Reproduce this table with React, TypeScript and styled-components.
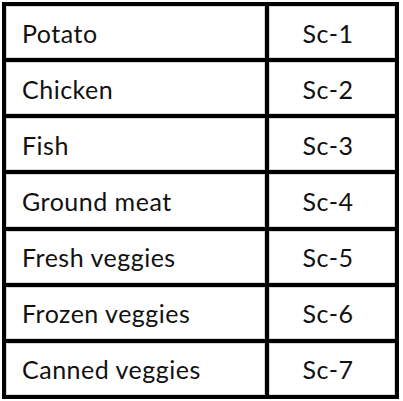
import { Fragment } from "react";
import styled, { createGlobalStyle } from "styled-components";

const GlobalStyle = createGlobalStyle`
  html, body {
    margin: 0;
    padding: 0;
    background: #ffffff;
  }
  body {
    font-family: Lato, "Noto Sans", "DejaVu Sans", sans-serif;
  }
`;

const Page = styled.div`
  padding: 2px;
`;

const Table = styled.div`
  display: grid;
  grid-template-columns: 259px 126px;
  grid-template-rows: repeat(7, 1fr);
  gap: 4px;
  width: max-content;
  height: 397px;
  box-sizing: border-box;
  padding: 4px;
  background: #000000;
`;

const Cell = styled.div<{ $center?: boolean }>`
  display: flex;
  align-items: center;
  justify-content: ${(p) => (p.$center ? "center" : "flex-start")};
  padding: ${(p) => (p.$center ? "2px 8px 0 0" : "2px 0 0 16px")};
  background: #ffffff;
  box-shadow: inset 0 0 0 1px #d6d6d6;
  color: #111111;
  font-size: 25px;
  letter-spacing: 0.5px;
  line-height: 1;
`;

const rows = [
  ["Potato", "Sc-1"],
  ["Chicken", "Sc-2"],
  ["Fish", "Sc-3"],
  ["Ground meat", "Sc-4"],
  ["Fresh veggies", "Sc-5"],
  ["Frozen veggies", "Sc-6"],
  ["Canned veggies", "Sc-7"],
];

export default function App() {
  return (
    <>
      <GlobalStyle />
      <Page>
        <Table>
          {rows.map(([name, code]) => (
            <Fragment key={code}>
              <Cell>{name}</Cell>
              <Cell $center>{code}</Cell>
            </Fragment>
          ))}
        </Table>
      </Page>
    </>
  );
}
